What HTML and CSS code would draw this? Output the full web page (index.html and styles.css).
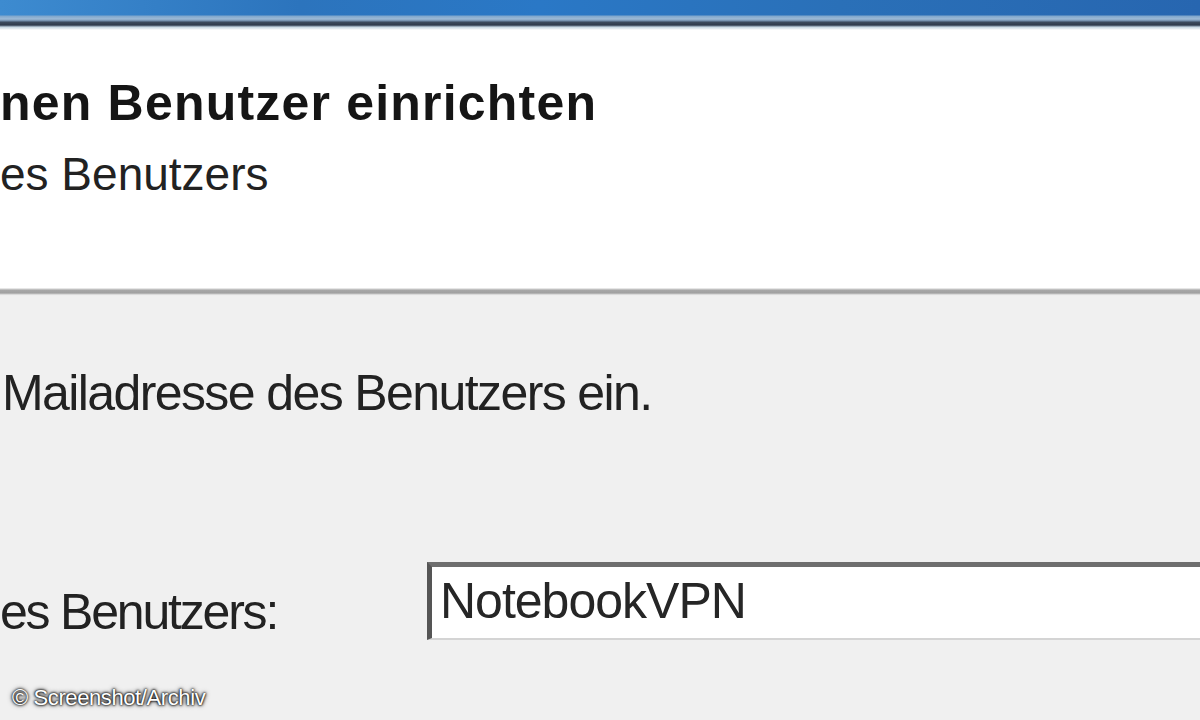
FILE: index.html
```html
<!DOCTYPE html>
<html lang="de">
<head>
<meta charset="utf-8">
<title>Benutzer einrichten</title>
<link rel="stylesheet" href="styles.css">
</head>
<body>
<div class="window">
  <div class="titlebar"></div>
  <div class="header">
    <div class="title">nen Benutzer einrichten</div>
    <div class="subtitle">es Benutzers</div>
  </div>
  <div class="divider"></div>
  <div class="content">
    <div class="intro">Mailadresse des Benutzers ein.</div>
    <div class="row">
      <div class="label">es Benutzers:</div>
      <div class="field"><span class="value">NotebookVPN</span></div>
    </div>
  </div>
  <div class="watermark">© Screenshot/Archiv</div>
</div>
</body>
</html>
```

FILE: styles.css
```css
html, body {
  margin: 0;
  padding: 0;
  width: 1200px;
  height: 720px;
  overflow: hidden;
  background: #f0f0f0;
}

.window {
  position: relative;
  width: 1200px;
  height: 720px;
  display: flex;
  flex-direction: column;
  font-family: "Liberation Sans", Arial, sans-serif;
  color: #1c1c1c;
  overflow: hidden;
}

.titlebar {
  height: 30px;
  flex: none;
  background:
    linear-gradient(to bottom,
      rgba(0,0,0,0) 0px,
      rgba(0,0,0,0) 15px,
      #7fa6cc 16px,
      #9dbad6 19px,
      #6b88a6 21px,
      #3c4c60 22px,
      #2e3b4c 25px,
      #6d7f92 26px,
      #c4d6e2 27px,
      #e8f0f4 29px,
      #ffffff 30px),
    linear-gradient(to right, #3d8bd0 0%, #2c74bd 25%, #2a78c6 45%, #2a70b8 70%, #2766b0 100%);
}

.header {
  height: 258px;
  flex: none;
  background: #ffffff;
  padding-top: 43px;
  box-sizing: border-box;
}

.title {
  font-weight: bold;
  font-size: 50px;
  line-height: 60px;
  letter-spacing: 1.2px;
  color: #151515;
  white-space: nowrap;
}

.subtitle {
  margin-top: 13px;
  font-size: 46px;
  line-height: 56px;
  white-space: nowrap;
  color: #222;
}

.divider {
  height: 8px;
  flex: none;
  background: linear-gradient(to bottom,
    #f4f4f4 0px, #d8d8d8 1px, #a8a8a8 2px, #a0a0a0 5px, #c8c8c8 6px, #ececec 7px, #f0f0f0 8px);
}

.content {
  flex: 1;
  display: flex;
  flex-direction: column;
  background: #f0f0f0;
}

.intro {
  margin-top: 67px;
  padding-left: 2px;
  font-size: 50px;
  line-height: 60px;
  letter-spacing: -1.6px;
  white-space: nowrap;
  color: #222;
}

.row {
  margin-top: 139px;
  display: flex;
  align-items: flex-start;
}

.label {
  width: 427px;
  flex: none;
  margin-top: 20px;
  font-size: 50px;
  line-height: 60px;
  letter-spacing: -2.2px;
  white-space: nowrap;
  color: #222;
}

.field {
  flex: none;
  width: 900px;
  height: 78px;
  box-sizing: border-box;
  background: #ffffff;
  border-top: 5px solid #6e6e6e;
  border-left: 5px solid #555555;
  border-bottom: 2px solid #d4d4d4;
  padding-left: 8px;
  padding-top: 4px;
}

.value {
  font-size: 50px;
  line-height: 60px;
  letter-spacing: -1px;
  color: #262626;
  white-space: nowrap;
}

.watermark {
  position: absolute;
  left: 12px;
  top: 683px;
  font-size: 22px;
  line-height: 30px;
  letter-spacing: -0.4px;
  color: #ffffff;
  text-shadow: 0 0 3px #000, 0 0 5px rgba(0,0,0,0.8), 0 0 2px #000;
  white-space: nowrap;
}
```
